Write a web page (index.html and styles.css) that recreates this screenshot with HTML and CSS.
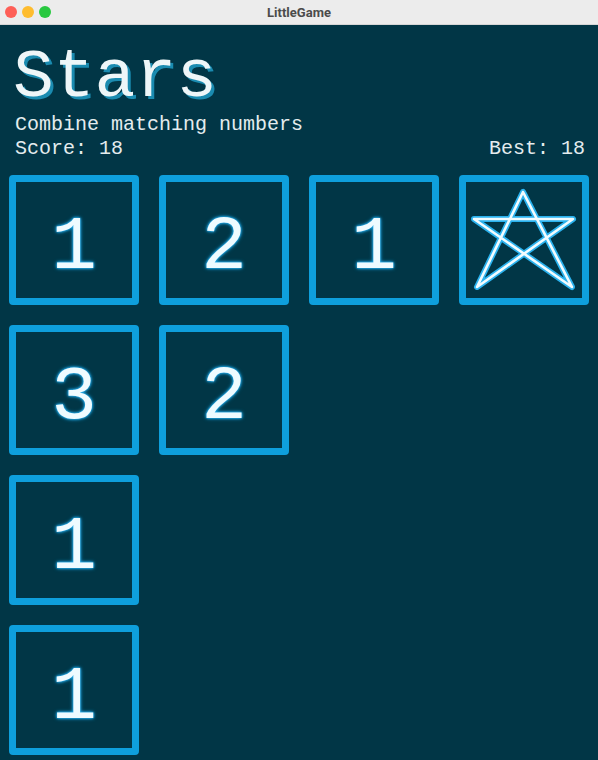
FILE: index.html
```html
<!DOCTYPE html>
<html>
<head>
<meta charset="utf-8">
<link rel="stylesheet" href="styles.css">
</head>
<body>
<div class="titlebar">
  <div class="lights">
    <span class="light red"></span>
    <span class="light yellow"></span>
    <span class="light green"></span>
  </div>
  <div class="wintitle">LittleGame</div>
</div>
<main class="content">
  <h1 class="title">Stars</h1>
  <p class="line">Combine matching numbers</p>
  <div class="scores">
    <span class="line">Score: 18</span>
    <span class="line">Best: 18</span>
  </div>
  <div class="board">
    <div class="row">
      <div class="tile"><span class="num">1</span></div>
      <div class="tile"><span class="num">2</span></div>
      <div class="tile"><span class="num">1</span></div>
      <div class="tile">
        <svg class="star" width="116" height="116" viewBox="0 0 116 116">
          <polygon points="57,10 11,105 107,37 8,37 106,105" fill="none" stroke="#2ab2ee" stroke-width="6" stroke-linejoin="round"/>
          <polygon points="57,10 11,105 107,37 8,37 106,105" fill="none" stroke="#f2fcff" stroke-width="2.6" stroke-linejoin="round"/>
        </svg>
      </div>
    </div>
    <div class="row">
      <div class="tile"><span class="num">3</span></div>
      <div class="tile"><span class="num">2</span></div>
    </div>
    <div class="row">
      <div class="tile"><span class="num">1</span></div>
    </div>
    <div class="row">
      <div class="tile"><span class="num">1</span></div>
    </div>
  </div>
</main>
</body>
</html>
```
FILE: styles.css
```css
html, body {
  margin: 0;
  padding: 0;
  background: #013646;
  height: 760px;
  overflow: hidden;
}
.titlebar {
  height: 24px;
  background: #ececec;
  border-bottom: 1px solid #d6d6d6;
  position: relative;
  display: flex;
  align-items: center;
  justify-content: center;
}
.lights {
  position: absolute;
  left: 5px;
  top: 6px;
  display: flex;
  gap: 5px;
}
.light {
  width: 12px;
  height: 12px;
  border-radius: 50%;
  display: block;
}
.red { background: #fe5f57; }
.yellow { background: #febc2e; }
.green { background: #28c840; }
.wintitle {
  font-family: "Roboto", "Liberation Sans", sans-serif;
  font-weight: 700;
  font-size: 13px;
  color: #4b4b4b;
}
.content {
  padding: 0 9px;
}
.title {
  margin: 0;
  padding: 16px 0 0 4px;
  font-family: "Liberation Mono", monospace;
  font-weight: 400;
  font-size: 68px;
  line-height: 74px;
  height: 72px;
  color: #eef6f8;
  text-shadow: 3px 3px 0 #1a8bb0;
}
.line {
  font-family: "Liberation Mono", monospace;
  font-size: 20px;
  line-height: 24px;
  color: #e4ecee;
  letter-spacing: 0;
}
p.line {
  margin: 0;
  padding-left: 6px;
}
.scores {
  display: flex;
  justify-content: space-between;
  padding: 0 4px 0 6px;
}
.board {
  margin-top: 14px;
  display: flex;
  flex-direction: column;
  gap: 20px;
}
.row {
  display: flex;
  gap: 20px;
}
.tile {
  width: 130px;
  height: 130px;
  box-sizing: border-box;
  border: 7px solid #0e9fdc;
  border-radius: 4px;
  display: flex;
  align-items: center;
  justify-content: center;
}
.num {
  font-family: "Liberation Mono", monospace;
  font-size: 76px;
  line-height: 1;
  padding-top: 16px;
  color: #effbff;
  text-shadow: 0 0 2px #22aeee, 0 0 3px #22aeee, 0 0 4px #1a9ad6;
}
.star {
  display: block;
}
```
